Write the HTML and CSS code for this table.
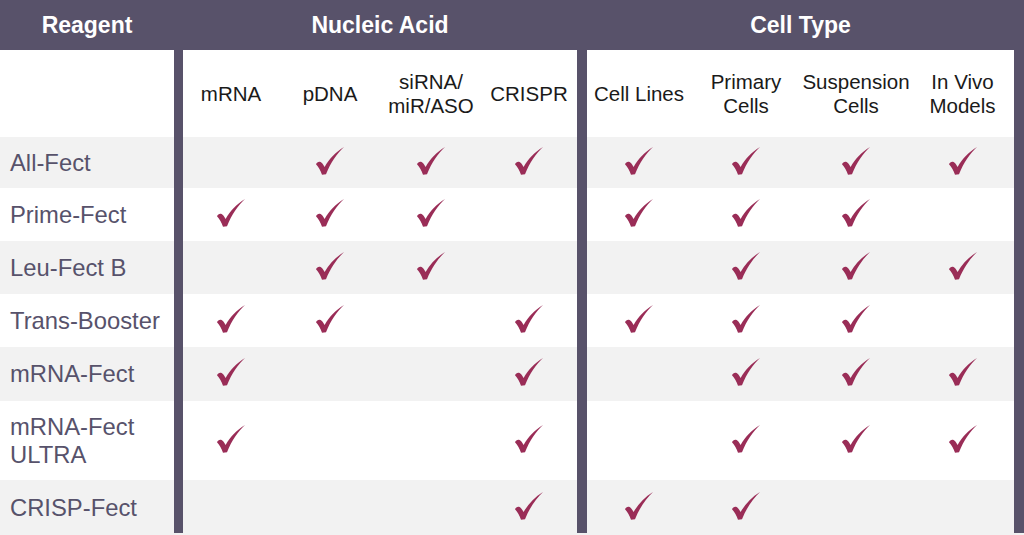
FILE: index.html
```html
<!DOCTYPE html>
<html lang="en">
<head>
<meta charset="utf-8">
<title>Reagent compatibility</title>
<link rel="stylesheet" href="styles.css">
</head>
<body>
<svg class="defs" width="0" height="0" aria-hidden="true">
  <symbol id="chk" viewBox="0 0 28 28">
    <path d="M0 17.2 C0.8 15.2 2.8 14.2 4.6 15 C6 15.7 7.2 17.6 8.6 20 C13 12.2 19.5 5.2 28 0 C21.2 6.6 14.8 15.2 10 27.3 L6 27.8 C4.6 23.6 2.6 19.8 0 17.2 Z"/>
  </symbol>
</svg>
<div class="table">
  <div class="row head">
    <div class="title reagent">Reagent</div>
    <div class="title nucleic">Nucleic Acid</div>
    <div class="title cell">Cell Type</div>
  </div>
  <div class="row sub">
    <div class="label"></div><div class="bar"></div>
    <div class="col">mRNA</div><div class="col">pDNA</div><div class="col">siRNA/<br>miR/ASO</div><div class="col">CRISPR</div>
    <div class="bar"></div>
    <div class="col">Cell Lines</div><div class="col">Primary<br>Cells</div><div class="col">Suspension<br>Cells</div><div class="col">In Vivo<br>Models</div>
    <div class="bar"></div>
  </div>
  <div class="row alt h51">
    <div class="label">All-Fect</div><div class="bar"></div>
    <div class="c"></div><div class="c"><svg class="ck"><use href="#chk"/></svg></div><div class="c"><svg class="ck"><use href="#chk"/></svg></div><div class="c"><svg class="ck"><use href="#chk"/></svg></div>
    <div class="bar"></div>
    <div class="c"><svg class="ck"><use href="#chk"/></svg></div><div class="c"><svg class="ck"><use href="#chk"/></svg></div><div class="c"><svg class="ck"><use href="#chk"/></svg></div><div class="c"><svg class="ck"><use href="#chk"/></svg></div>
    <div class="bar"></div>
  </div>
  <div class="row h53">
    <div class="label">Prime-Fect</div><div class="bar"></div>
    <div class="c"><svg class="ck"><use href="#chk"/></svg></div><div class="c"><svg class="ck"><use href="#chk"/></svg></div><div class="c"><svg class="ck"><use href="#chk"/></svg></div><div class="c"></div>
    <div class="bar"></div>
    <div class="c"><svg class="ck"><use href="#chk"/></svg></div><div class="c"><svg class="ck"><use href="#chk"/></svg></div><div class="c"><svg class="ck"><use href="#chk"/></svg></div><div class="c"></div>
    <div class="bar"></div>
  </div>
  <div class="row alt h53">
    <div class="label">Leu-Fect B</div><div class="bar"></div>
    <div class="c"></div><div class="c"><svg class="ck"><use href="#chk"/></svg></div><div class="c"><svg class="ck"><use href="#chk"/></svg></div><div class="c"></div>
    <div class="bar"></div>
    <div class="c"></div><div class="c"><svg class="ck"><use href="#chk"/></svg></div><div class="c"><svg class="ck"><use href="#chk"/></svg></div><div class="c"><svg class="ck"><use href="#chk"/></svg></div>
    <div class="bar"></div>
  </div>
  <div class="row h53">
    <div class="label">Trans-Booster</div><div class="bar"></div>
    <div class="c"><svg class="ck"><use href="#chk"/></svg></div><div class="c"><svg class="ck"><use href="#chk"/></svg></div><div class="c"></div><div class="c"><svg class="ck"><use href="#chk"/></svg></div>
    <div class="bar"></div>
    <div class="c"><svg class="ck"><use href="#chk"/></svg></div><div class="c"><svg class="ck"><use href="#chk"/></svg></div><div class="c"><svg class="ck"><use href="#chk"/></svg></div><div class="c"></div>
    <div class="bar"></div>
  </div>
  <div class="row alt h54">
    <div class="label">mRNA-Fect</div><div class="bar"></div>
    <div class="c"><svg class="ck"><use href="#chk"/></svg></div><div class="c"></div><div class="c"></div><div class="c"><svg class="ck"><use href="#chk"/></svg></div>
    <div class="bar"></div>
    <div class="c"></div><div class="c"><svg class="ck"><use href="#chk"/></svg></div><div class="c"><svg class="ck"><use href="#chk"/></svg></div><div class="c"><svg class="ck"><use href="#chk"/></svg></div>
    <div class="bar"></div>
  </div>
  <div class="row h79">
    <div class="label">mRNA-Fect<br>ULTRA</div><div class="bar"></div>
    <div class="c"><svg class="ck"><use href="#chk"/></svg></div><div class="c"></div><div class="c"></div><div class="c"><svg class="ck"><use href="#chk"/></svg></div>
    <div class="bar"></div>
    <div class="c"></div><div class="c"><svg class="ck"><use href="#chk"/></svg></div><div class="c"><svg class="ck"><use href="#chk"/></svg></div><div class="c"><svg class="ck"><use href="#chk"/></svg></div>
    <div class="bar"></div>
  </div>
  <div class="row alt h55 last">
    <div class="label">CRISP-Fect</div><div class="bar"></div>
    <div class="c"></div><div class="c"></div><div class="c"></div><div class="c"><svg class="ck"><use href="#chk"/></svg></div>
    <div class="bar"></div>
    <div class="c"><svg class="ck"><use href="#chk"/></svg></div><div class="c"><svg class="ck"><use href="#chk"/></svg></div><div class="c"></div><div class="c"></div>
    <div class="bar"></div>
  </div>
</div>
</body>
</html>
```
FILE: styles.css
```css
html, body {
  margin: 0;
  padding: 0;
  background: #ffffff;
}
body {
  font-family: "Liberation Sans", Arial, sans-serif;
  width: 1024px;
  height: 535px;
  overflow: hidden;
}
.defs {
  position: absolute;
  width: 0;
  height: 0;
}
.table {
  display: flex;
  flex-direction: column;
  width: 1024px;
}
.row {
  display: grid;
  grid-template-columns: 174px 9px 96px 102px 100px 96px 10px 104px 110px 110px 103px 10px;
  background: #ffffff;
}
.row.alt {
  background: #f2f2f2;
}
.head {
  height: 50px;
  background: #58526a;
}
.title {
  grid-row: 1;
  color: #ffffff;
  font-weight: bold;
  font-size: 23px;
  display: flex;
  align-items: center;
  justify-content: center;
  white-space: nowrap;
}
.title.reagent { grid-column: 1 / 2; }
.title.nucleic { grid-column: 3 / 7; }
.title.cell { grid-column: 8 / 12; }
.sub {
  height: 87px;
}
.col {
  display: flex;
  align-items: center;
  justify-content: center;
  text-align: center;
  font-size: 20.5px;
  line-height: 24px;
  color: #1a1a1a;
  white-space: nowrap;
}
.bar {
  background: #58526a;
}
.last .bar {
  margin-bottom: 2px;
}
.label {
  display: flex;
  align-items: center;
  padding-left: 10px;
  font-size: 23.8px;
  line-height: 28px;
  color: #57526b;
  white-space: nowrap;
}
.c {
  display: flex;
  align-items: center;
  justify-content: center;
  padding-bottom: 4px;
}
.ck {
  width: 28px;
  height: 28px;
  fill: #9a2d57;
}
.h51 { height: 51px; }
.h53 { height: 53px; }
.h54 { height: 54px; }
.h55 { height: 55px; }
.h79 { height: 79px; }
```
